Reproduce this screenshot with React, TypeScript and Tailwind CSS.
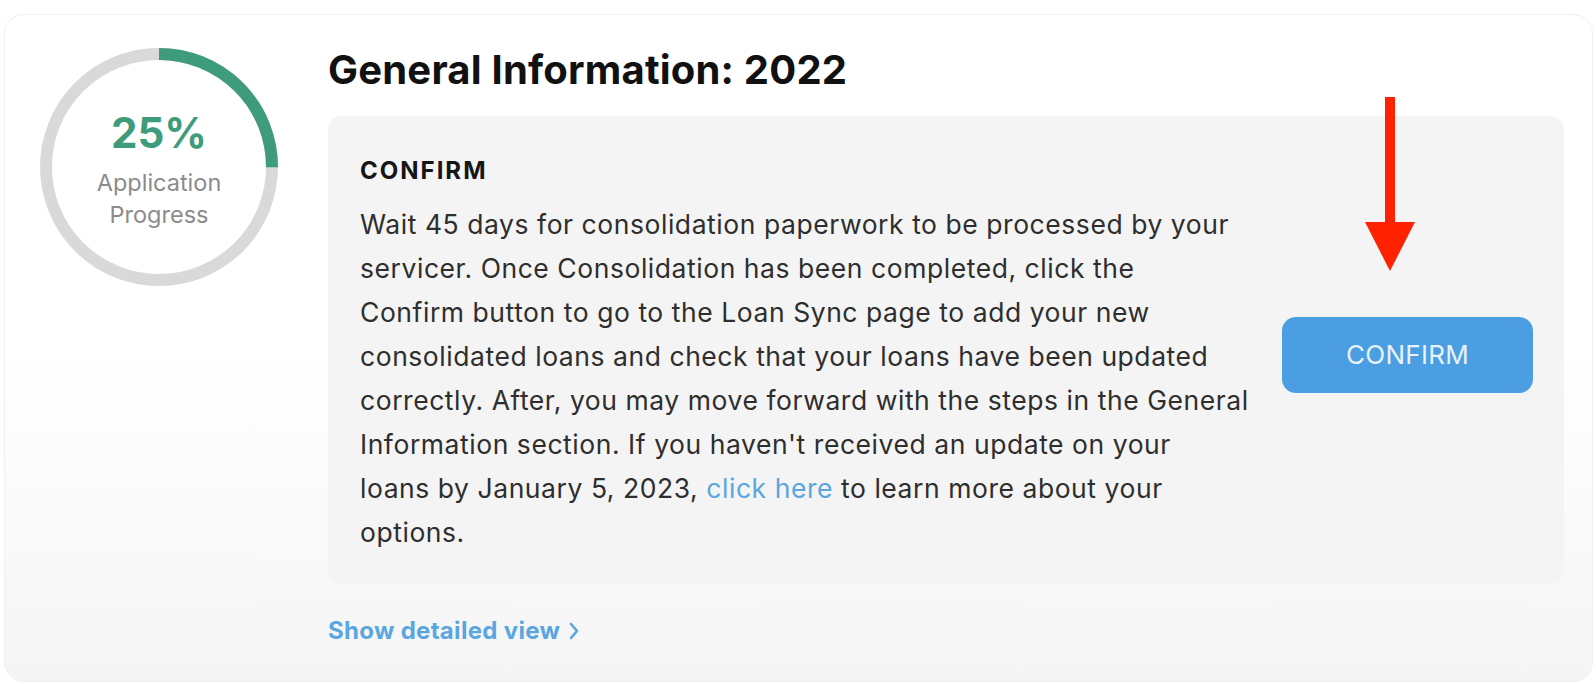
const ProgressRing = ({ percent }: { percent: number }) => {
    const size = 238
    const stroke = 12
    const r = (size - stroke) / 2
    const c = 2 * Math.PI * r
    return (
        <div className="relative w-[238px] h-[238px] shrink-0">
            <svg width={size} height={size} viewBox={`0 0 ${size} ${size}`} className="-rotate-90">
                <circle cx={size / 2} cy={size / 2} r={r} fill="none" stroke="#d9d9d9" strokeWidth={stroke} />
                <circle
                    cx={size / 2}
                    cy={size / 2}
                    r={r}
                    fill="none"
                    stroke="#3e9c7a"
                    strokeWidth={stroke}
                    strokeDasharray={`${(c * percent) / 100} ${c}`}
                />
            </svg>
            <div className="absolute inset-0 flex flex-col items-center pt-[62px]">
                <span className="text-[42px] leading-[46px] font-bold text-[#3e9c7a]">{percent}%</span>
                <span className="mt-[11px] text-[23.5px] leading-[32px] text-[#8b8b8b]">Application</span>
                <span className="text-[23.5px] leading-[32px] text-[#8b8b8b]">Progress</span>
            </div>
        </div>
    )
}

const RedArrow = () => (
    <svg width="52" height="176" viewBox="0 0 52 176" className="absolute left-[1359px] top-[82px]">
        <rect x="21" y="0" width="10" height="128" fill="#ff2200" />
        <polygon points="1,125 51,125 26,174" fill="#ff2200" />
    </svg>
)

const App = () => {
    const lines = [
        "Wait 45 days for consolidation paperwork to be processed by your",
        "servicer. Once Consolidation has been completed, click the",
        "Confirm button to go to the Loan Sync page to add your new",
        "consolidated loans and check that your loans have been updated",
        "correctly. After, you may move forward with the steps in the General",
        "Information section. If you haven't received an update on your",
    ]

    return (
        <div className="min-h-screen bg-white pt-[14px] pl-[4px] pr-[3px] font-['Inter',sans-serif]">
            <div className="relative h-[668px] rounded-[20px] border border-[#f0f0f0] bg-linear-to-b from-white via-white to-[#f5f5f5] flex pt-[31px] pl-[35px] pr-[28px]">
                <div className="pt-[2px]">
                    <ProgressRing percent={25} />
                </div>

                <div className="ml-[50px] flex-1">
                    <h1 className="text-[40px] leading-[48px] font-bold text-[#111] tracking-[0.2px]">General Information: 2022</h1>

                    <div className="mt-[22px] rounded-[14px] bg-[#f4f4f4] flex items-center pl-[32px] pr-[31px] pt-[39px] pb-[30px]">
                        <div className="flex-1">
                            <h2 className="text-[24px] leading-[32px] font-bold text-[#151515] tracking-[2px] mb-[15px]">CONFIRM</h2>
                            <p className="text-[26.5px] leading-[44px] text-[#2e2e2e] tracking-[0.55px] whitespace-nowrap">
                                {lines.map((l, i) => (
                                    <span key={i}>
                                        {l}
                                        <br />
                                    </span>
                                ))}
                                loans by January 5, 2023, <a className="text-[#5aa6e0]">click here</a> to learn more about your
                                <br />
                                options.
                            </p>
                        </div>
                        <button className="w-[251px] h-[76px] rounded-[14px] bg-[#4a9ee1] text-[#e8f2fc] text-[26px] tracking-[0.3px]">
                            CONFIRM
                        </button>
                    </div>

                    <div className="mt-[33px] flex items-center gap-[8px] text-[#5aa6e0]">
                        <span className="text-[24px] leading-[28px] font-bold tracking-[0.3px]">Show detailed view</span>
                        <svg width="12" height="18" viewBox="0 0 12 18" fill="none" stroke="#5aa6e0" strokeWidth="2.6" strokeLinecap="round" strokeLinejoin="round">
                            <path d="M3 2 L9 9 L3 16" />
                        </svg>
                    </div>
                </div>

                <RedArrow />
            </div>
        </div>
    )
}

export default App
